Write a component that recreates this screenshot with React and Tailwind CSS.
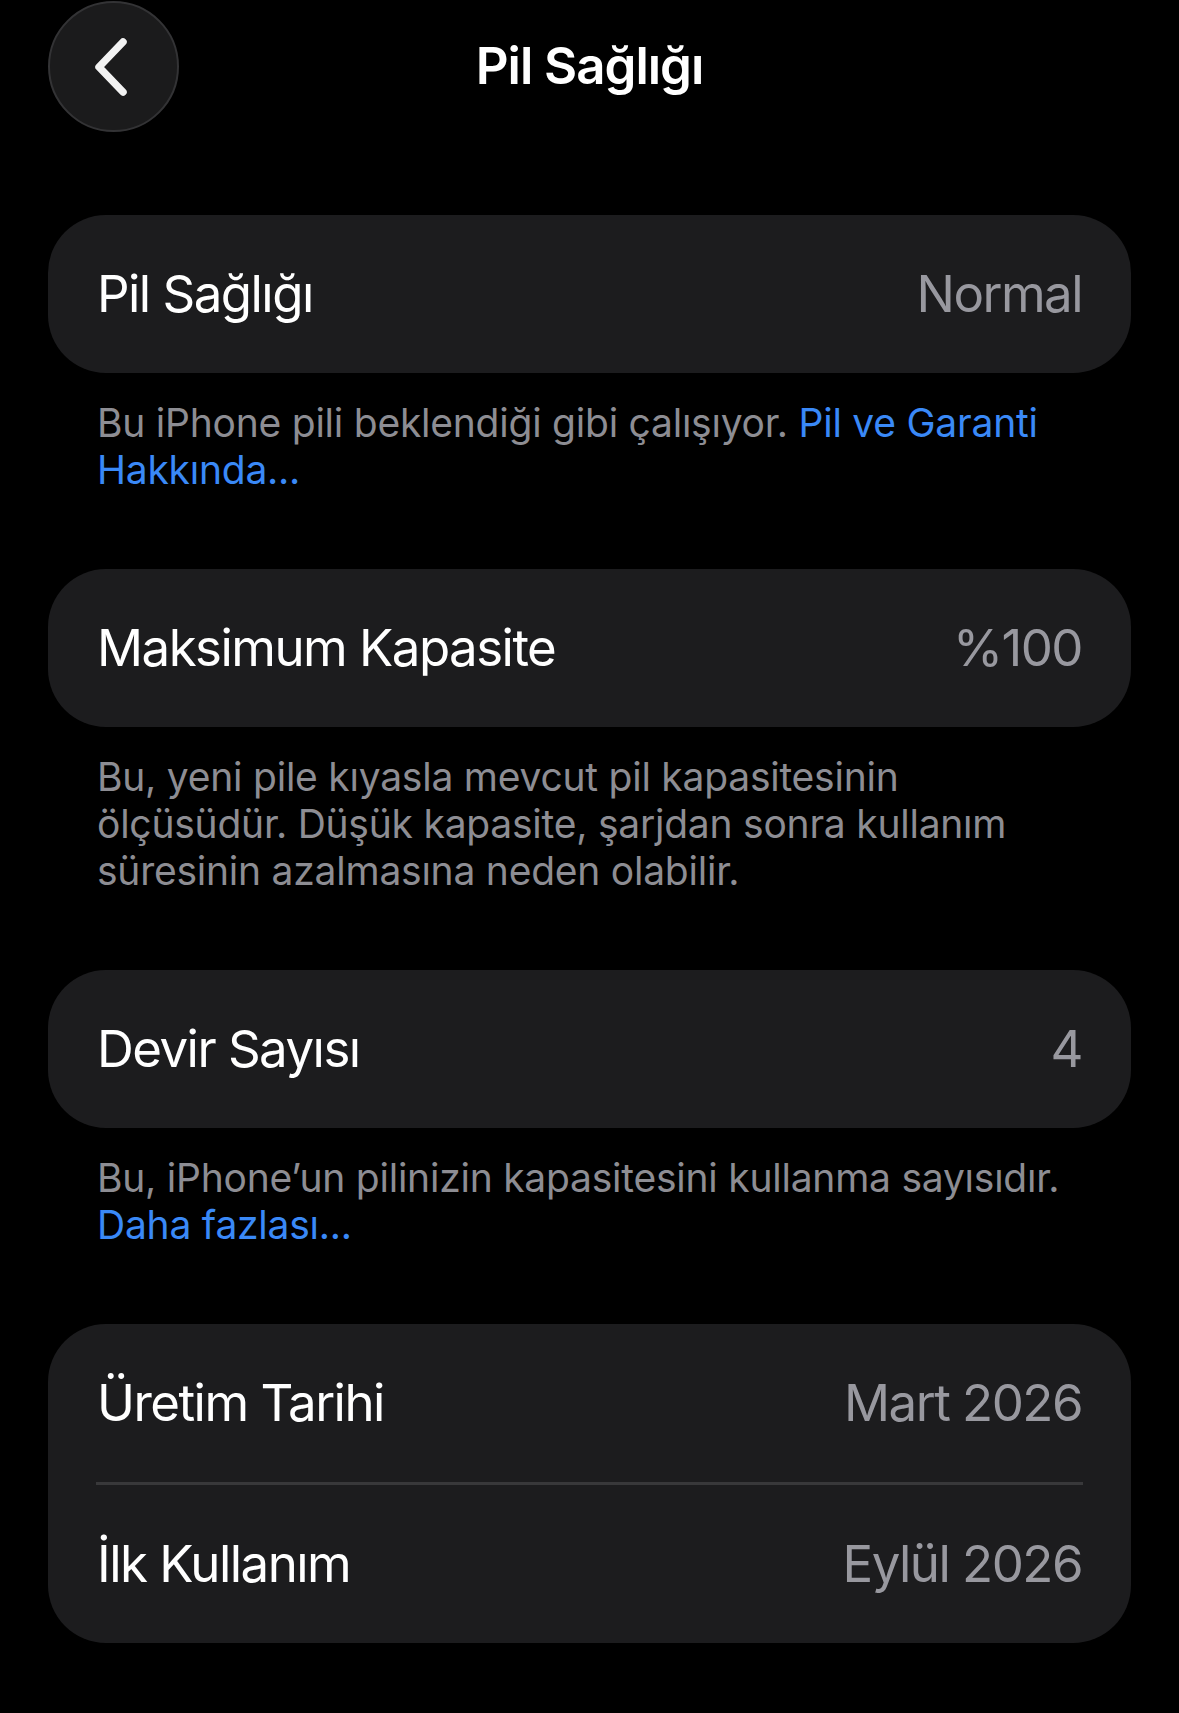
import React from "react";

const font = { fontFamily: "Inter, 'Noto Sans', sans-serif" };

function BackButton() {
  return (
    <button className="flex h-[131px] w-[131px] items-center justify-center rounded-full border-2 border-[#333335] bg-[#1b1b1c]">
      <svg width="46" height="66" viewBox="0 0 46 66" className="-ml-[6px]">
        <path
          d="M35 8 L11 33 L35 58"
          fill="none"
          stroke="#f2f2f2"
          strokeWidth="7.5"
          strokeLinecap="round"
          strokeLinejoin="round"
        />
      </svg>
    </button>
  );
}

function Row({ label, value }) {
  return (
    <div className="flex h-[158px] items-center justify-between px-[49px]">
      <span className="text-[51px] text-white tracking-[-0.03em]">{label}</span>
      <span className="text-[51px] text-[#98989f] tracking-[-0.03em]">{value}</span>
    </div>
  );
}

function Card({ children }) {
  return <div className="mx-[48px] rounded-[58px] bg-[#1c1c1e]">{children}</div>;
}

function Footer({ children }) {
  return (
    <p className="px-[97px] pt-[26px] pb-[76px] text-[39px] leading-[47px] tracking-[-0.006em] text-[#8d8d93]">
      {children}
    </p>
  );
}

const link = "text-[#3a89f7]";

export default function App() {
  return (
    <div className="min-h-[1713px] w-[1179px] bg-black" style={font}>
      <div className="relative flex h-[132px] items-center pl-[48px] pt-[1px]">
        <BackButton />
        <h1 className="absolute left-0 right-0 text-center text-[51px] font-semibold text-white tracking-[-0.02em]">
          Pil Sağlığı
        </h1>
      </div>

      <div className="pt-[83px]">
        <Card>
          <Row label="Pil Sağlığı" value="Normal" />
        </Card>
        <Footer>
          Bu iPhone pili beklendiği gibi çalışıyor.{" "}
          <span className={link}>Pil ve Garanti Hakkında...</span>
        </Footer>

        <Card>
          <Row label="Maksimum Kapasite" value="%100" />
        </Card>
        <Footer>
          Bu, yeni pile kıyasla mevcut pil kapasitesinin ölçüsüdür. Düşük kapasite, şarjdan sonra kullanım süresinin azalmasına neden olabilir.
        </Footer>

        <Card>
          <Row label="Devir Sayısı" value="4" />
        </Card>
        <Footer>
          Bu, iPhone’un pilinizin kapasitesini kullanma sayısıdır.{" "}
          <span className={link}>Daha fazlası...</span>
        </Footer>

        <Card>
          <Row label="Üretim Tarihi" value="Mart 2026" />
          <div className="mx-[48px] h-[3px] bg-[#38383a]" />
          <Row label="İlk Kullanım" value="Eylül 2026" />
        </Card>
      </div>
    </div>
  );
}
